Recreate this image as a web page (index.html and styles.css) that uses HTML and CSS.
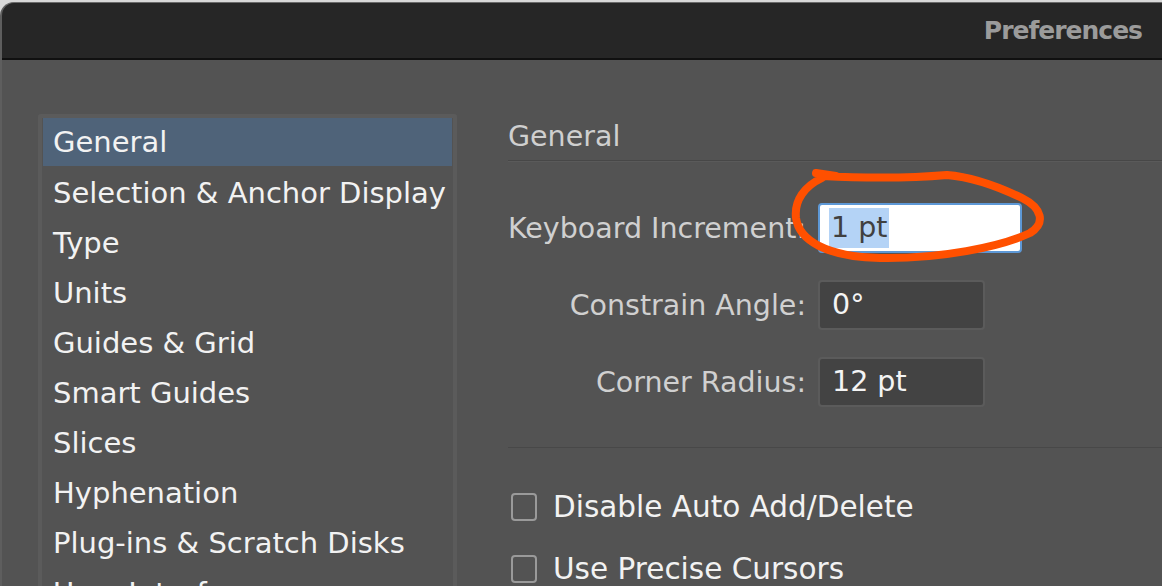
FILE: index.html
```html
<!DOCTYPE html>
<html>
<head>
<meta charset="utf-8">
<link rel="stylesheet" href="styles.css">
</head>
<body>
<div class="window">
  <div class="titlebar"><span class="title">Preferences</span></div>
  <div class="content">
    <ul class="list">
      <li class="item selected">General</li>
      <li class="item">Selection &amp; Anchor Display</li>
      <li class="item">Type</li>
      <li class="item">Units</li>
      <li class="item">Guides &amp; Grid</li>
      <li class="item">Smart Guides</li>
      <li class="item">Slices</li>
      <li class="item">Hyphenation</li>
      <li class="item">Plug-ins &amp; Scratch Disks</li>
      <li class="item">User Interface</li>
    </ul>
    <div class="panel">
      <div class="heading">General</div>
      <div class="form">
        <div class="row">
          <label class="label">Keyboard Increment:</label>
          <div class="field focus"><span class="sel">1 pt</span></div>
        </div>
        <div class="row">
          <label class="label">Constrain Angle:</label>
          <div class="field">0°</div>
        </div>
        <div class="row">
          <label class="label">Corner Radius:</label>
          <div class="field">12 pt</div>
        </div>
      </div>
      <div class="checks">
        <div class="check"><span class="box"></span><span>Disable Auto Add/Delete</span></div>
        <div class="check"><span class="box"></span><span>Use Precise Cursors</span></div>
      </div>
    </div>
  </div>
  <svg class="scribble" width="1162" height="586" viewBox="0 0 1162 586">
    <path d="M 822 178 C 805 186, 794 200, 796 218 C 799 240, 826 257, 880 258 C 940 259, 1000 247, 1030 233 C 1046 223, 1042 208, 1022 198 C 997 186, 972 177, 947 175 C 912 178, 862 178, 822 176 M 816 173 L 836 176" fill="none" stroke="#ff5000" stroke-width="8" stroke-linecap="round" stroke-linejoin="round"/>
  </svg>
</div>
</body>
</html>
```

FILE: styles.css
```css
html, body {
  margin: 0;
  padding: 0;
  background: #d8d8d8;
  overflow: hidden;
}
.window {
  position: relative;
  width: 1162px;
  height: 584px;
  margin-top: 2px;
  background: #535353;
  border-top-left-radius: 14px;
  border-top: 1px solid #6a6a6a;
  border-left: 2px solid #5e5e5e;
  overflow: hidden;
  font-family: "DejaVu Sans", sans-serif;
  box-sizing: border-box;
}
.titlebar {
  height: 55px;
  background: #262626;
  border-bottom: 2px solid #101010;
  display: flex;
  justify-content: flex-end;
  align-items: center;
  padding-right: 20px;
}
.title {
  color: #9b9b9b;
  font-weight: bold;
  font-size: 25px;
  letter-spacing: -1px;
}
.content {
  display: flex;
  padding: 54px 0 0 36px;
}
.list {
  list-style: none;
  margin: 0;
  padding: 0;
  width: 411px;
  height: 480px;
  border: 4px solid #5b5b5b;
  border-bottom: none;
  border-radius: 3px 3px 0 0;
}
.item {
  height: 50px;
  line-height: 50px;
  padding-left: 10px;
  margin: 0 1px;
  color: #f2f2f2;
  font-size: 29px;
  white-space: nowrap;
}
.item.selected {
  background: #4f6379;
  height: 48px;
  line-height: 48px;
  margin-bottom: 2px;
}
.panel {
  flex: 1;
  margin-left: 51px;
}
.heading {
  color: #cfcfcf;
  font-size: 28.5px;
  height: 46px;
  line-height: 46px;
  border-bottom: 1px solid #474747;
  box-shadow: 0 1px 0 #5a5a5a;
}
.form {
  padding-top: 42px;
  display: flex;
  flex-direction: column;
  gap: 27px;
  padding-bottom: 40px;
  border-bottom: 1px solid #484848;
}
.row {
  display: flex;
  align-items: center;
}
.label {
  width: 298px;
  text-align: right;
  color: #d0d0d0;
  font-size: 28.5px;
  margin-right: 12px;
  white-space: nowrap;
}
.field {
  width: 167px;
  height: 50px;
  box-sizing: border-box;
  background: #434343;
  border: 2px solid #5b5b5b;
  border-radius: 4px;
  color: #f4f4f4;
  font-size: 28.5px;
  line-height: 46px;
  padding-left: 12px;
}
.field.focus {
  width: 204px;
  background: #ffffff;
  border: 2px solid #5d98d6;
  color: #404040;
  padding-left: 9px;
}
.sel {
  background: #b4d3f6;
  padding: 3px 2px 4px 2px;
}
.checks {
  padding-top: 28px;
}
.check {
  display: flex;
  align-items: center;
  height: 62px;
  color: #f2f2f2;
  font-size: 29.5px;
}
.box {
  width: 22px;
  height: 24px;
  border: 2px solid #9a9a9a;
  border-radius: 4px;
  margin-left: 3px;
  margin-right: 16px;
  box-sizing: content-box;
}
.scribble {
  position: absolute;
  left: -2px;
  top: -3px;
  pointer-events: none;
}
```
